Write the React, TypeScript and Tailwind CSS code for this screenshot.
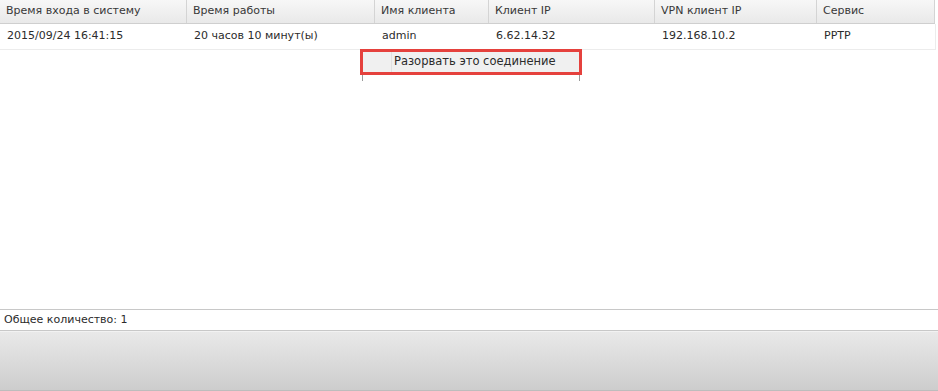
const COLUMNS = [
  { label: 'Время входа в систему', width: 'w-[187px]' },
  { label: 'Время работы', width: 'w-[188px]' },
  { label: 'Имя клиента', width: 'w-[114px]' },
  { label: 'Клиент IP', width: 'w-[166px]' },
  { label: 'VPN клиент IP', width: 'w-[162px]' },
  { label: 'Сервис', width: 'flex-1' },
]

const ROW = [
  '2015/09/24 16:41:15',
  '20 часов 10 минут(ы)',
  'admin',
  '6.62.14.32',
  '192.168.10.2',
  'PPTP',
]

export default function App() {
  return (
    <div
      className="w-[938px] h-[391px] bg-white flex flex-col text-[11px] text-[#2b2b2b]"
      style={{ fontFamily: '"DejaVu Sans", Verdana, sans-serif' }}
    >
      <div className="flex-1 flex flex-col relative">
        {/* Header */}
        <div className="flex h-[24px] mr-[3px] bg-gradient-to-b from-[#f7f7f7] to-[#e9e9e9] border-b border-[#cfcfcf]">
          {COLUMNS.map((col, i) => (
            <div
              key={i}
              className={`${col.width} flex items-center pl-[6px] border-r border-[#d4d4d4] text-[#383838]`}
            >
              {col.label}
            </div>
          ))}
        </div>

        {/* Data row */}
        <div className="flex h-[26px] mr-[2px] border-b border-r border-[#ececec]">
          {ROW.map((cell, i) => (
            <div key={i} className={`${COLUMNS[i].width} flex items-center pl-[7px]`}>
              {cell}
            </div>
          ))}
        </div>

        {/* Context menu */}
        <div className="absolute left-[360px] top-[49px] w-[222px] h-[32px]">
          <div className="absolute left-[2px] top-0 w-[218px] h-[32px] border-x border-[#9a9a9a]" />
          <div className="absolute inset-x-0 top-0 h-[26px] border-[3px] border-[#e5413d] bg-[#f0f0f0] flex">
            <div className="w-[29px] border-r border-[#e0e0e0]" />
            <div className="flex items-center pl-[2px] text-[11.5px] text-[#2b2b2b]">
              Разорвать это соединение
            </div>
          </div>
        </div>
      </div>

      {/* Footer */}
      <div className="h-[22px] border-y border-[#c8c8c8] flex items-center pl-[4px]">
        Общее количество: 1
      </div>
      <div className="h-[60px] bg-gradient-to-b from-[#e9e9e9] to-[#cdcdcd] border-t border-[#f2f2f2] border-b border-b-[#bdbdbd]" />
    </div>
  )
}
